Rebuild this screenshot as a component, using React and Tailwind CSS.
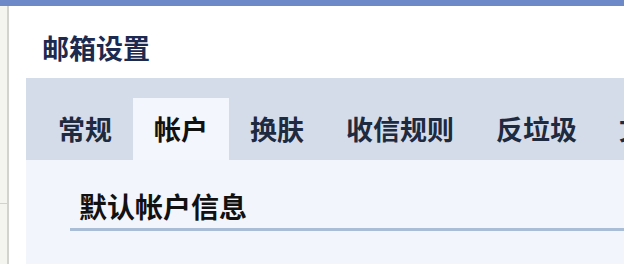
import React from 'react';

const tabs = ['常规', '帐户', '换肤', '收信规则', '反垃圾', '文件夹'];

const App = () => {
  return (
    <div
      className="w-[624px] h-[264px] overflow-hidden flex flex-col bg-white"
      style={{ fontFamily: '"Noto Sans CJK SC", "Noto Sans", sans-serif' }}
    >
      {/* top accent bar */}
      <div className="h-[6px] shrink-0 bg-[#6d89c8]" />

      <div className="flex flex-1 min-h-0">
        {/* left sidebar sliver */}
        <div className="w-[9px] shrink-0 bg-[#f5f5f0] border-r-2 border-[#d2d2ce] flex flex-col">
          <div className="h-[198px] border-b border-[#d2d2ce]" />
        </div>

        {/* main panel */}
        <div className="flex-1 min-w-0 pl-[17px] flex flex-col">
          <h1 className="h-[72px] shrink-0 pl-[16px] pt-[26px] text-[27px] leading-[32px] font-bold text-[#1c2a4f] whitespace-nowrap">
            邮箱设置
          </h1>

          <div className="h-[82px] shrink-0 bg-[#d5dce9] pl-[11px] flex items-end whitespace-nowrap">
            {tabs.map((t, i) => (
              <div
                key={t}
                className={
                  i === 1
                    ? 'h-[62px] px-[21px] flex items-center text-[27px] font-bold text-[#111111] bg-[#f3f6fc]'
                    : 'h-[62px] px-[21px] flex items-center text-[27px] font-bold text-[#1e2a40]'
                }
              >
                {t}
              </div>
            ))}
          </div>

          <div className="flex-1 bg-[#f2f5fc] pl-[44px] pt-[27px]">
            <div className="border-b-[3px] border-[#a9bdd6] pl-[9px] pb-[2px]">
              <h2 className="text-[28px] leading-[39px] font-bold text-[#111111] whitespace-nowrap">
                默认帐户信息
              </h2>
            </div>
          </div>
        </div>
      </div>
    </div>
  );
};

export default App;
